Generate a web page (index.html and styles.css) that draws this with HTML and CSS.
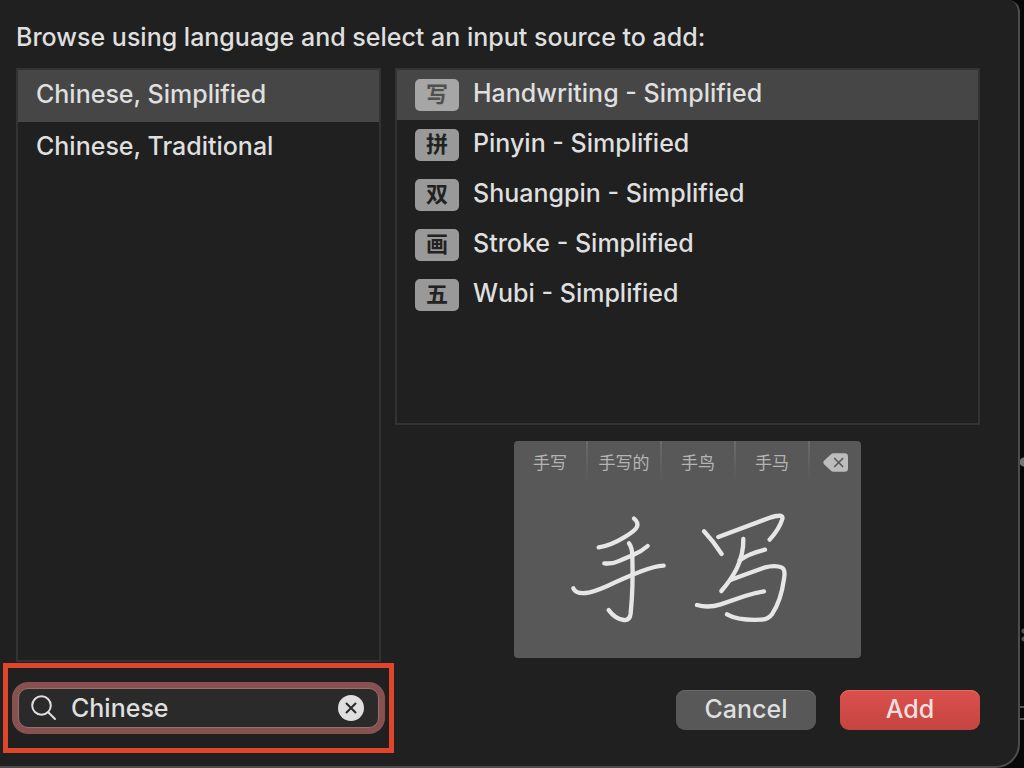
FILE: index.html
```
<!DOCTYPE html>
<html lang="en">
<head>
  <meta charset="UTF-8" />
  <meta name="viewport" content="width=device-width, initial-scale=1.0" />
  <title>Add Input Source</title>
  <link rel="stylesheet" href="styles.css">
</head>
<body>
  <main class="dialog">
    <h1>Browse using language and select an input source to add:</h1>

    <div class="columns">
      <section class="languages">
        <ul class="list">
          <li><button class="row selected">Chinese, Simplified</button></li>
          <li><button class="row">Chinese, Traditional</button></li>
        </ul>

        <div class="search">
          <svg class="search-icon" viewBox="0 0 26 26" aria-hidden="true">
            <circle cx="10.5" cy="10.5" r="9.3" />
            <path d="M17.5 17.5 L24 24" />
          </svg>
          <input type="text" id="search" aria-label="Search" value="Chinese" />
          <button class="clear" aria-label="Clear">
            <svg viewBox="0 0 26 26" aria-hidden="true">
              <circle cx="13" cy="13" r="13" />
              <path d="M8.5 8.5 L17.5 17.5 M17.5 8.5 L8.5 17.5" />
            </svg>
          </button>
        </div>
      </section>

      <section class="sources">
        <ul class="list">
          <li><button class="row selected"><span class="badge" lang="zh-CN">写</span><span class="name">Handwriting - Simplified</span></button></li>
          <li><button class="row"><span class="badge" lang="zh-CN">拼</span><span class="name">Pinyin - Simplified</span></button></li>
          <li><button class="row"><span class="badge" lang="zh-CN">双</span><span class="name">Shuangpin - Simplified</span></button></li>
          <li><button class="row"><span class="badge" lang="zh-CN">画</span><span class="name">Stroke - Simplified</span></button></li>
          <li><button class="row"><span class="badge" lang="zh-CN">五</span><span class="name">Wubi - Simplified</span></button></li>
        </ul>

        <div class="preview" lang="zh-CN">
          <div class="candidates">
            <span>手写</span>
            <span>手写的</span>
            <span>手鸟</span>
            <span>手马</span>
            <span>
              <svg class="delete" viewBox="0 0 75 56" aria-hidden="true">
                <path class="key" d="M24 3 Q27 0 31 0 H65 Q75 0 75 10 V46 Q75 56 65 56 H31 Q27 56 24 53 L3 33 Q-1 28 3 23 Z" />
                <path class="cross" d="M35 16 L59 40 M59 16 L35 40" />
              </svg>
            </span>
          </div>
          <svg class="strokes" viewBox="-135 -60 1041 534" aria-hidden="true">
            <path d="M225 56 Q239 67 234 80 Q230 91 194 113 Q155 137 119 142" />
            <path d="M136 190 Q160 193 185 181 L222 165 Q248 154 266 138" />
            <path d="M43 265 Q51 282 80 279 Q102 277 145 258 Q203 231 247 214 Q287 198 314 197" />
            <path d="M210 130 Q220 143 220 170 Q223 260 215 340 Q212 362 195 360 Q168 357 149 330" />
            <path d="M435 94 Q464 125 488 162" />
            <path d="M478 111 L630 54 Q675 39 670 57 Q661 87 632 119" />
            <path d="M553 117 Q554 162 533 206 Q516 240 487 273" />
            <path d="M542 181 Q570 160 618 149" />
            <path d="M514 240 Q559 223 615 203 Q650 194 669 203 Q680 208 675 237 Q666 302 640 341 Q628 358 606 359 Q537 362 504 343" />
            <path d="M414 315 Q448 325 485 313 L558 288 Q585 279 615 274" />
          </svg>
        </div>

        <div class="actions">
          <button class="btn">Cancel</button>
          <button class="btn primary">Add</button>
        </div>
      </section>
    </div>
  </main>
</body>
</html>
```

FILE: styles.css
```
* {
  box-sizing: border-box;
}

/* the window behind shows as a thin strip on the right */
body {
  margin: 0;
  background-color: #080808;
  background-image:
    radial-gradient(circle at 100% 462px, #777 4px, transparent 5px),
    radial-gradient(circle at 100% 631px, #555 2px, transparent 3px),
    radial-gradient(circle at 100% 639px, #555 2px, transparent 3px),
    linear-gradient(transparent 706px, #555 706px, #555 708px, transparent 708px),
    linear-gradient(transparent 718px, #555 718px, #555 720px, transparent 720px);
  background-position: right top;
  background-size: 4px 100vh;
  background-repeat: no-repeat;
  color: #dfdfdf;
  font-family: Inter, 'Noto Sans CJK SC', sans-serif;
  font-size: 25px;
  font-weight: 500;
  line-height: 30px;
}

button, input {
  font: inherit;
  color: inherit;
  border: none;
  background: none;
  padding: 0;
}

.dialog {
  display: flex;
  flex-direction: column;
  min-height: 100vh;
  margin-right: 4px;
  padding: 22px 38px 36px 16px;
  background-color: #202020;
  border-right: 2px solid #4c4c4c;
  border-bottom: 2px solid #4c4c4c;
  border-radius: 0 12px 24px 0;
}

h1 {
  margin: 0 0 16px;
  font-size: 25px;
  font-weight: 500;
}

.columns {
  flex: 1;
  display: grid;
  grid-template-columns: minmax(0, 365fr) minmax(0, 585fr);
  gap: 14px;
}

.languages, .sources {
  display: flex;
  flex-direction: column;
}

.list {
  flex: 1;
  margin: 0;
  padding: 0;
  list-style: none;
  border: 2px solid #333;
}

.row {
  display: flex;
  align-items: center;
  width: 100%;
  height: 50px;
  padding: 0 18px;
  text-align: left;
}

.row.selected {
  background-color: #464646;
}

.languages .row {
  height: 52px;
  padding-bottom: 4px;
}

.badge {
  width: 44px;
  height: 32px;
  margin-right: 14px;
  border-radius: 5px;
  background-color: #999;
  color: #222;
  font-size: 22px;
  font-weight: 700;
  line-height: 30px;
  text-align: center;
}

.selected .badge {
  background-color: #a6a6a6;
  color: #505050;
}

.name {
  padding-bottom: 4px;
}

/* search field */
.search {
  position: relative;
  display: flex;
  align-items: center;
  height: 40px;
  margin: 26px 2px 2px;
  padding: 0 14px 0 12px;
  border: 1px solid #94706e;
  border-radius: 10px;
  background-color: #2a2a2a;
  box-shadow: 0 0 0 6px #875150;
}

/* highlight frame around the field */
.search::after {
  content: "";
  position: absolute;
  inset: -26px -16px;
  border: 5px solid #de452b;
  pointer-events: none;
}

.search-icon {
  width: 26px;
  height: 26px;
  fill: none;
  stroke: #dfdfdf;
  stroke-width: 2;
  stroke-linecap: round;
}

.search input {
  flex: 1;
  min-width: 0;
  margin: 0 14px;
  outline: none;
}

.clear, .clear svg {
  display: block;
  width: 26px;
  height: 26px;
}

.clear circle {
  fill: #dfdfdf;
}

.clear path {
  stroke: #2a2a2a;
  stroke-width: 2;
  stroke-linecap: round;
}

/* handwriting preview */
.preview {
  align-self: center;
  width: 347px;
  margin: 16px 0 32px;
  border-radius: 4px;
  background-color: #585858;
}

.candidates {
  display: grid;
  grid-template-columns: repeat(4, 74px) 1fr;
  height: 39px;
  color: #b4b4b4;
  font-family: 'Noto Sans CJK SC', sans-serif;
  font-size: 17px;
  font-weight: 400;
}

.candidates span {
  display: flex;
  align-items: center;
  justify-content: center;
  padding-top: 3px;
  border-right: 2px solid;
  border-image: linear-gradient(#6c6c6c, #585858) 1;
}

.candidates span:last-child {
  border: none;
}

.delete {
  width: 25px;
  height: 19px;
}

.delete .key {
  fill: #bcbcbc;
}

.delete .cross {
  stroke: #585858;
  stroke-width: 5;
  stroke-linecap: round;
}

.strokes {
  display: block;
  width: 100%;
  fill: none;
  stroke: #e6e6e6;
  stroke-width: 13;
  stroke-linecap: round;
  stroke-linejoin: round;
}

.actions {
  display: flex;
  justify-content: flex-end;
  gap: 24px;
}

.btn {
  width: 140px;
  height: 40px;
  padding-bottom: 2px;
  border-radius: 9px;
  background-color: #585858;
  box-shadow: inset 0 1px #6a6a6a;
}

.btn.primary {
  background: linear-gradient(#dc504e, #c44540);
  box-shadow: inset 0 1px #df6c69;
  color: #f5dfde;
}
```
